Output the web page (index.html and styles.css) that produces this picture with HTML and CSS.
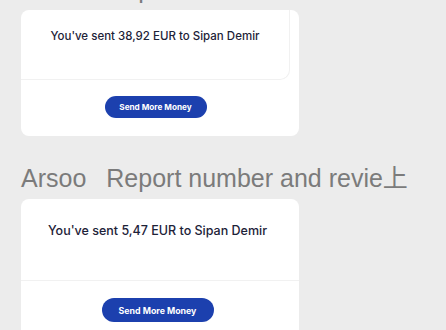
FILE: index.html
```html
<!DOCTYPE html>
<html lang="en">
<head>
    <meta charset="UTF-8">
    <title>Transfer Receipts</title>
    <link rel="stylesheet" href="styles.css">
</head>
<body>
    <div class="feed">
        <h2 class="section-title"><span>Arsoo</span><span>Report number and revie上</span></h2>

        <div class="receipt receipt-compact">
            <div class="receipt-summary">
                <p class="receipt-text">You've sent 38,92 EUR to Sipan Demir</p>
            </div>
            <div class="receipt-actions">
                <button class="send-btn">Send More Money</button>
            </div>
        </div>

        <h2 class="section-title"><span>Arsoo</span><span>Report number and revie上</span></h2>

        <div class="receipt">
            <div class="receipt-summary">
                <p class="receipt-text">You've sent 5,47 EUR to Sipan Demir</p>
            </div>
            <div class="receipt-actions">
                <button class="send-btn">Send More Money</button>
            </div>
        </div>
    </div>
</body>
</html>
```

FILE: styles.css
```css
html, body {
    margin: 0;
    padding: 0;
    background-color: #ececec;
    font-family: Inter, "Liberation Sans", sans-serif;
    overflow: hidden;
}

.feed {
    display: flex;
    flex-direction: column;
    padding-left: 21px;
    margin-top: -26px; /* page is scrolled a little */
}

.section-title {
    display: flex;
    gap: 20px;
    margin: 0;
    height: 30px;
    line-height: 30px;
    font-family: "Liberation Sans", "Noto Sans CJK JP", sans-serif;
    font-size: 25px;
    font-weight: normal;
    color: #7b7b7b;
    white-space: nowrap;
}

.receipt {
    width: 278px;
    margin-top: 6px;
    margin-bottom: 27px;
    background-color: #fff;
    border-radius: 8px;
}

.receipt-summary {
    height: 82px;
    display: flex;
    justify-content: center;
    padding: 22px 5px 0 0;
    box-sizing: border-box;
    border-bottom: 1px solid #f1f1f1;
}

.receipt-text {
    margin: 0;
    font-size: 12.5px;
    font-weight: 500;
    line-height: 20px;
    color: #1d2238;
}

.receipt-actions {
    display: flex;
    justify-content: center;
    padding: 17px 5px 20px 0;
}

.send-btn {
    width: 112px;
    height: 24px;
    border: none;
    border-radius: 12px;
    background-color: #1c40ae;
    color: #fff;
    font-family: Inter, "Liberation Sans", sans-serif;
    font-size: 8.8px;
    font-weight: 700;
    cursor: pointer;
}

/* first card is drawn a bit smaller */
.receipt-compact .receipt-summary {
    width: 269px;
    height: 70px;
    padding: 16px 0 0;
    border-right: 1px solid #f1f1f1;
    border-bottom-right-radius: 10px;
}

.receipt-compact .receipt-text {
    font-size: 11.5px;
}

.receipt-compact .receipt-actions {
    width: 269px;
    padding: 16px 0 18px;
}

.receipt-compact .send-btn {
    width: 102px;
    height: 22px;
    font-size: 8.2px;
}
```
